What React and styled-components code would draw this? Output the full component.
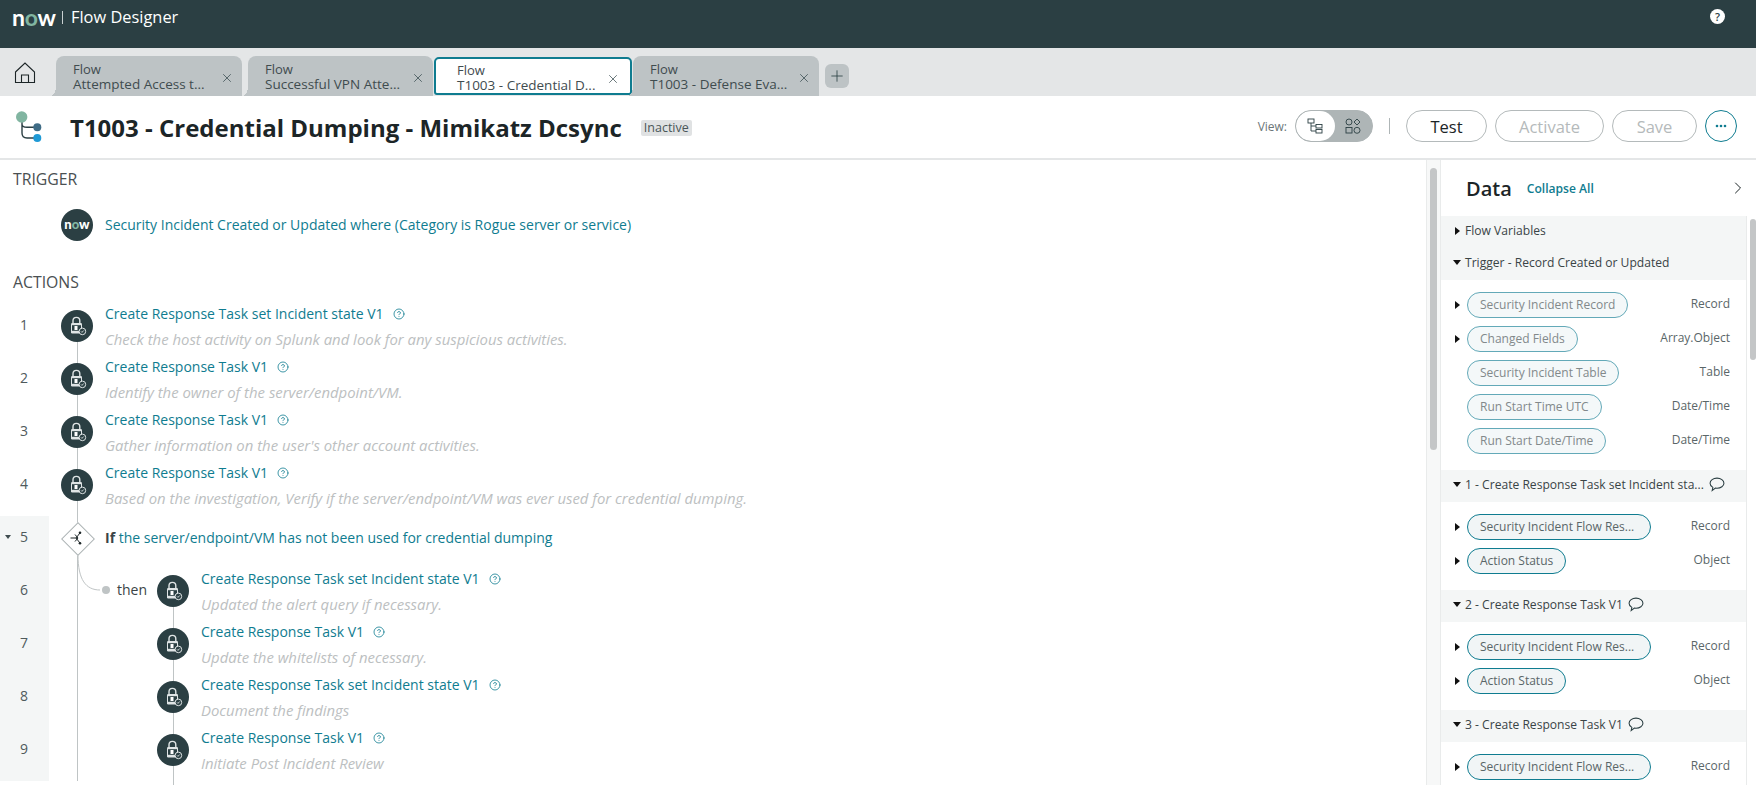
import styled, { createGlobalStyle } from "styled-components";
import { X, Plus, CircleHelp, ChevronRight } from "lucide-react";

const GlobalStyle = createGlobalStyle`
  html, body {
    margin: 0;
    padding: 0;
    background: #fff;
    font-family: "Open Sans", "Noto Sans", sans-serif;
  }
  * {
    box-sizing: border-box;
  }
`;

const Page = styled.div`
  width: 1756px;
  height: 785px;
  display: flex;
  flex-direction: column;
  overflow: hidden;
`;

const Header = styled.header`
  height: 48px;
  flex-shrink: 0;
  background: #2b3f43;
  color: #fff;
  display: flex;
  align-items: flex-start;
  padding: 7px 31px 0 12px;
`;

const Logo = styled.div`
  font-family: "Lato", sans-serif;
  font-weight: 700;
  font-size: 23px;
  line-height: 20px;
  letter-spacing: -0.3px;
  width: 43px;
  span {
    color: #81b5a1;
  }
`;

const HeaderSep = styled.div`
  width: 1px;
  height: 13px;
  margin: 4px 8px 0 7px;
  background: #c9d0d1;
`;

const AppName = styled.div`
  font-size: 16.4px;
  line-height: 20px;
  flex: 1;
`;

const HelpDot = styled.div`
  width: 15px;
  height: 15px;
  margin-top: 2px;
  border-radius: 50%;
  background: #fff;
  color: #2b3f43;
  font-size: 11px;
  font-weight: 600;
  line-height: 15px;
  text-align: center;
`;

const TabBar = styled.nav`
  height: 48px;
  flex-shrink: 0;
  background: #e4e6e7;
  display: flex;
  align-items: flex-end;
  padding-left: 13px;
`;

const HomeButton = styled.div`
  width: 43px;
  height: 40px;
  flex-shrink: 0;
  padding-top: 6px;
  color: #1c2527;
`;

const Tab = styled.div`
  position: relative;
  width: ${(p) => p.$width}px;
  height: ${(p) => (p.$active ? 38 : 40)}px;
  margin-right: ${(p) => p.$gap}px;
  margin-bottom: ${(p) => (p.$active ? 1 : 0)}px;
  padding: ${(p) => (p.$active ? "3px 0 0 21px" : "5px 0 0 17px")};
  background: ${(p) => (p.$active ? "#fff" : "#bdc3c5")};
  border: ${(p) => (p.$active ? "2px solid #0f7c90" : "none")};
  border-radius: ${(p) => (p.$active ? "5px 5px 3px 3px" : "8px 8px 0 0")};
  color: #3f4c4f;
  font-size: 13px;
  line-height: 16px;
  flex-shrink: 0;

  &::before {
    content: ${(p) => (p.$active ? "none" : '""')};
    position: absolute;
    left: -6px;
    bottom: 0;
    width: 6px;
    height: 10px;
    background: radial-gradient(ellipse at 0 0, transparent 70%, #bdc3c5 72%);
  }
`;

const TabTitle = styled.div`
  font-size: 13.5px;
  line-height: 15px;
  white-space: nowrap;
`;

const TabClose = styled(X)`
  position: absolute;
  right: ${(p) => (p.$active ? 10 : 8)}px;
  top: ${(p) => (p.$active ? 13 : 15)}px;
  color: #2b3f43;
`;

const AddTab = styled.div`
  width: 24px;
  height: 24px;
  margin: 0 0 8px 6px;
  border-radius: 6px;
  background: #bdc3c5;
  color: #2b3f43;
  display: flex;
  align-items: center;
  justify-content: center;
`;

const TitleBar = styled.div`
  height: 64px;
  flex-shrink: 0;
  border-bottom: 2px solid #e4e6e7;
  display: flex;
  align-items: center;
  padding: 0 19px 2px 16px;
`;

const FlowIcon = styled.svg`
  width: 28px;
  height: 32px;
  margin-right: 26px;
  flex-shrink: 0;
`;

const Title = styled.h1`
  margin: 3px 0 0;
  font-size: 24px;
  font-weight: 700;
  line-height: 32px;
  color: #1c2527;
`;

const StatusBadge = styled.span`
  margin: 3px 0 0 19px;
  padding: 0 3px;
  height: 16px;
  background: #e0e2e3;
  border-radius: 2px;
  font-size: 12.5px;
  line-height: 16px;
  color: #4a5658;
`;

const Toolbar = styled.div`
  margin-left: auto;
  display: flex;
  align-items: center;
`;

const ViewLabel = styled.span`
  font-size: 12px;
  color: #6b7678;
  margin-right: 8px;
`;

const ViewToggle = styled.div`
  width: 78px;
  height: 32px;
  border: 1px solid #aeb5b6;
  border-radius: 16px;
  background: #aeb5b6;
  display: flex;
  overflow: hidden;
`;

const ViewOption = styled.div`
  width: ${(p) => (p.$on ? 39 : 38)}px;
  background: ${(p) => (p.$on ? "#fff" : "transparent")};
  border-radius: ${(p) => (p.$on ? "16px" : "0")};
  display: flex;
  align-items: center;
  justify-content: center;
`;

const ToolSep = styled.div`
  width: 1px;
  height: 16px;
  background: #aeb5b6;
  margin: 0 16px;
`;

const PillButton = styled.button`
  width: ${(p) => p.$width}px;
  height: 32px;
  margin-right: 8px;
  padding: 0;
  background: #fff;
  border: 1px solid #b4babb;
  border-radius: 16px;
  font-family: inherit;
  font-size: 16.5px;
  color: ${(p) => (p.$disabled ? "#b5babb" : "#1c2527")};
`;

const MoreButton = styled.button`
  width: 32px;
  height: 32px;
  padding: 0;
  background: #fff;
  border: 1px solid #0f7c90;
  border-radius: 50%;
  display: flex;
  align-items: center;
  justify-content: center;
`;

const Body = styled.div`
  flex: 1;
  display: flex;
  min-height: 0;
`;

const Canvas = styled.main`
  flex: 1;
  overflow: hidden;
`;

const SectionTitle = styled.div`
  height: 38px;
  margin-top: ${(p) => p.$top || 0}px;
  padding-left: 13px;
  font-size: 15.8px;
  font-weight: 500;
  line-height: 38px;
  color: #4a5052;
`;

const TriggerRow = styled.div`
  display: flex;
  align-items: center;
  gap: 12px;
  margin-top: 11px;
  padding-left: 61px;
`;

const NowBadge = styled.div`
  width: 32px;
  height: 32px;
  border-radius: 50%;
  background: #2b3f43;
  color: #fff;
  font-family: "Lato", sans-serif;
  font-weight: 900;
  font-size: 13px;
  line-height: 31px;
  text-align: center;
  span {
    color: #81b5a1;
  }
`;

const StepLink = styled.span`
  color: #0f7c90;
  font-size: 14px;
  line-height: 20px;
  white-space: nowrap;
`;

const ActionList = styled.div`
  margin-top: 3px;
`;

const Row = styled.div`
  position: relative;
  height: 53px;
  display: flex;

  &::before {
    content: "";
    position: absolute;
    left: 77px;
    top: ${(p) => (p.$first ? 22 : 0)}px;
    bottom: 0;
    width: 1px;
    background: #bfc4c5;
  }
`;

const Gutter = styled.div`
  width: 49px;
  flex-shrink: 0;
  padding: 11px 0 0 20px;
  background: ${(p) => (p.$shade ? "#f4f6f6" : "transparent")};
  color: #4f5a5c;
  font-size: 14px;
  line-height: 20px;
  position: relative;
`;

const GutterCaret = styled.i`
  position: absolute;
  left: 5px;
  top: 19px;
  border-left: 3.5px solid transparent;
  border-right: 3.5px solid transparent;
  border-top: 4px solid #3f4c4f;
`;

const Spacer = styled.div`
  width: 12px;
  flex-shrink: 0;
`;

const Branch = styled.div`
  position: relative;
  width: 110px;
  flex-shrink: 0;
  color: #3a4446;
  font-size: 14px;
  line-height: 20px;
  padding: 11px 0 0 68px;
`;

const BranchCurve = styled.svg`
  position: absolute;
  left: 28px;
  top: -14px;
  width: 34px;
  height: 42px;
`;

const Node = styled.div`
  position: relative;
  z-index: 1;
  width: 32px;
  height: 32px;
  margin-top: 6px;
  margin-right: 12px;
  margin-left: ${(p) => (p.$nested ? -2 : 0)}px;
  flex-shrink: 0;
  border-radius: 50%;
  background: #2b3f43;
  display: flex;
  align-items: center;
  justify-content: center;

  &::after {
    content: "";
    position: absolute;
    left: 16px;
    top: 32px;
    width: 1px;
    height: 21px;
    background: #bfc4c5;
  }
`;

const Diamond = styled.div`
  position: relative;
  z-index: 1;
  width: 32px;
  height: 32px;
  margin-top: 6px;
  margin-right: 12px;
  flex-shrink: 0;
  display: flex;
  align-items: center;
  justify-content: center;

  &::before {
    content: "";
    position: absolute;
    left: 5px;
    top: 5px;
    width: 22px;
    height: 22px;
    background: #fff;
    border: 1px solid #aeb5b6;
    transform: rotate(45deg);
  }
  svg {
    position: relative;
  }
`;

const StepText = styled.div`
  padding-top: ${(p) => (p.$single ? 10 : 0)}px;
  min-width: 0;
`;

const StepHead = styled.div`
  display: flex;
  align-items: center;
  gap: 9px;
  height: 20px;
`;

const HelpIcon = styled(CircleHelp)`
  color: #0f7c90;
  flex-shrink: 0;
`;

const StepNote = styled.div`
  margin-top: 5px;
  color: #bcc0c1;
  font-size: 14.9px;
  font-style: italic;
  line-height: 20px;
  white-space: nowrap;
`;

const Strong = styled.b`
  color: #3a4446;
  font-weight: 700;
`;

const ScrollTrack = styled.div`
  width: ${(p) => p.$width}px;
  flex-shrink: 0;
  padding: ${(p) => p.$pad};
  background: ${(p) => p.$bg};
  border-left: 1px solid #e9ebeb;
  border-right: ${(p) => (p.$edge ? "1px solid #e9ebeb" : "none")};
`;

const ScrollThumb = styled.div`
  height: ${(p) => p.$height}px;
  border-radius: 4px;
  background: #c4c6c7;
`;

const Panel = styled.aside`
  width: 315px;
  flex-shrink: 0;
  display: flex;
  flex-direction: column;
  min-height: 0;
`;

const PanelHead = styled.div`
  height: 56px;
  flex-shrink: 0;
  display: flex;
  align-items: center;
  padding: 0 8px 0 25px;
  color: #1c2527;
`;

const PanelTitle = styled.div`
  font-size: 20px;
  font-weight: 600;
`;

const CollapseAll = styled.div`
  margin-left: 15px;
  margin-top: 1px;
  flex: 1;
  font-size: 12.1px;
  font-weight: 600;
  color: #0f7c90;
`;

const PanelScroll = styled.div`
  flex: 1;
  display: flex;
  min-height: 0;
`;

const PanelList = styled.div`
  width: 305px;
  flex-shrink: 0;
  overflow: hidden;
`;

const GroupHead = styled.div`
  height: 32px;
  padding-bottom: 3px;
  background: #f4f6f6;
  display: flex;
  align-items: center;
  padding-left: ${(p) => (p.$closed ? 14 : 12)}px;
  color: #3a4446;
  font-size: 12.1px;
  white-space: nowrap;
`;

const CaretDown = styled.i`
  margin-right: 4px;
  border-left: 4px solid transparent;
  border-right: 4px solid transparent;
  border-top: 5px solid #111;
`;

const CaretRight = styled.i`
  flex-shrink: 0;
  border-top: 4px solid transparent;
  border-bottom: 4px solid transparent;
  border-left: 5px solid #111;
`;

const GroupName = styled.span`
  margin-left: ${(p) => (p.$closed ? 5 : 0)}px;
`;

const CommentIcon = styled.svg`
  width: 16px;
  height: 15px;
  margin-left: 5px;
  flex-shrink: 0;
`;

const GroupBody = styled.div`
  padding: 12px 16px 16px 14px;
  background: #fff;
  display: flex;
  flex-direction: column;
  gap: 8px;
`;

const DataRow = styled.div`
  height: 26px;
  display: flex;
  align-items: center;
`;

const CaretSlot = styled.div`
  width: 12px;
  flex-shrink: 0;
  display: flex;
  align-items: center;
`;

const DataPill = styled.div`
  height: 26px;
  width: ${(p) => (p.$width ? `${p.$width}px` : "auto")};
  padding: 0 12px;
  border: 1px solid ${(p) => (p.$dark ? "#0f7c90" : "#63a9b8")};
  border-radius: 13px;
  background: ${(p) => (p.$dark ? "#f1f5f6" : "#f4f8f9")};
  color: ${(p) => (p.$dark ? "#5a6668" : "#82898b")};
  font-size: 12px;
  line-height: 24px;
  white-space: nowrap;
`;

const DataType = styled.div`
  margin-left: auto;
  margin-top: -3px;
  color: #5a6668;
  font-size: 12px;
`;

const LockIcon = () => (
  <svg width="20" height="20" viewBox="0 0 20 20" fill="none">
    <path d="M6 7V4.800a3.400 3.400 0 0 1 6.800 0V7" stroke="#dfe4e5" strokeWidth="1.400" />
    <rect x="4" y="7" width="11" height="10.500" rx="1.200" fill="#dfe4e5" />
    <rect x="5" y="9.200" width="9" height="5.600" fill="#2b3f43" />
    <rect x="7.500" y="10" width="3" height="4" fill="#fff" />
    <circle cx="15.400" cy="15.400" r="3.300" fill="#2b3f43" stroke="#dfe4e5" strokeWidth="1" />
    <path d="M14 15.400l1 1 1.700-1.900" stroke="#dfe4e5" strokeWidth="0.900" />
  </svg>
);

const BranchIcon = () => (
  <svg width="16" height="16" viewBox="0 0 16 16" fill="none" stroke="#1c2527" strokeWidth="1">
    <path d="M1.500 8h5.500L11 3M7 8l4 5M6 4.500L9 8l-3 3.500" />
    <circle cx="11" cy="2.800" r="1.300" fill="#1c2527" stroke="none" />
    <circle cx="11" cy="13.200" r="1.300" fill="#1c2527" stroke="none" />
  </svg>
);

const Comment = () => (
  <CommentIcon viewBox="0 0 15 14" fill="none" stroke="#2b3f43" strokeWidth="1">
    <path d="M7.500 1C3.900 1 1 3.100 1 5.800c0 1.600 1 3 2.600 3.900L3 12.600l3-2.200c.5.100 1 .100 1.500.100 3.600 0 6.500-2.100 6.500-4.700S11.100 1 7.500 1z" />
  </CommentIcon>
);

const Step = ({ n, title, note, nested, first, then }) => (
  <Row $first={first}>
    <Gutter $shade={nested}>{n}</Gutter>
    {nested ? (
      <Branch>
        {then && (
          <>
            <BranchCurve viewBox="0 0 34 42" fill="none">
              <path d="M1 0c0 25 8 35 22 35" stroke="#bfc4c5" strokeWidth="1" />
              <circle cx="29" cy="35" r="4" fill="#bfc4c5" />
            </BranchCurve>
            then
          </>
        )}
      </Branch>
    ) : (
      <Spacer />
    )}
    <Node $nested={nested}>
      <LockIcon />
    </Node>
    <StepText>
      <StepHead>
        <StepLink>{title}</StepLink>
        <HelpIcon size={12} strokeWidth={1.6} />
      </StepHead>
      <StepNote>{note}</StepNote>
    </StepText>
  </Row>
);

const tabs = [
  { title: "Attempted Access t...", width: 186, gap: 6 },
  { title: "Successful VPN Atte...", width: 185, gap: 1 },
  { title: "T1003 - Credential D...", width: 198, gap: 1, active: true },
  { title: "T1003 - Defense Eva...", width: 186, gap: 0 },
];

const groups = [
  {
    title: "1 - Create Response Task set Incident sta...",
    items: [
      { name: "Security Incident Flow Res...", type: "Record", open: true, width: 184 },
      { name: "Action Status", type: "Object", open: true },
    ],
  },
  {
    title: "2 - Create Response Task V1",
    items: [
      { name: "Security Incident Flow Res...", type: "Record", open: true, width: 184 },
      { name: "Action Status", type: "Object", open: true },
    ],
  },
  {
    title: "3 - Create Response Task V1",
    items: [{ name: "Security Incident Flow Res...", type: "Record", open: true, width: 184 }],
  },
];

const triggerItems = [
  { name: "Security Incident Record", type: "Record", open: true },
  { name: "Changed Fields", type: "Array.Object", open: true },
  { name: "Security Incident Table", type: "Table" },
  { name: "Run Start Time UTC", type: "Date/Time" },
  { name: "Run Start Date/Time", type: "Date/Time" },
];

const DataItem = ({ item, dark }) => (
  <DataRow>
    <CaretSlot>{item.open && <CaretRight />}</CaretSlot>
    <DataPill $dark={dark} $width={item.width}>
      {item.name}
    </DataPill>
    <DataType>{item.type}</DataType>
  </DataRow>
);

const App = () => {
  return (
    <Page>
      <GlobalStyle />
      <Header>
        <Logo>
          n<span>o</span>w
        </Logo>
        <HeaderSep />
        <AppName>Flow Designer</AppName>
        <HelpDot>?</HelpDot>
      </Header>

      <TabBar>
        <HomeButton>
          <svg width="24" height="24" viewBox="0 0 24 24" fill="none" stroke="currentColor" strokeWidth="1.100">
            <path d="M2.500 10L12 1l9.500 9v10.500h-19z" />
            <path d="M8.500 20.500V13h7v7.500" />
          </svg>
        </HomeButton>
        {tabs.map((t) => (
          <Tab key={t.title} $width={t.width} $gap={t.gap} $active={t.active}>
            <div>Flow</div>
            <TabTitle>{t.title}</TabTitle>
            <TabClose $active={t.active} size={14} strokeWidth={1.2} />
          </Tab>
        ))}
        <AddTab>
          <Plus size={18} strokeWidth={1.1} />
        </AddTab>
      </TabBar>

      <TitleBar>
        <FlowIcon viewBox="0 0 28 32" fill="none">
          <path d="M6 12v11c0 3 2 5 5 5h7M6 14c0 2.500 2 3.300 5 3.300h7" stroke="#2b3f43" strokeWidth="1.400" />
          <circle cx="5.700" cy="7" r="5.700" fill="#81b5a1" />
          <circle cx="21.300" cy="17.300" r="4" fill="#3f6c86" />
          <circle cx="21.300" cy="28" r="4" fill="#1f9ad6" />
        </FlowIcon>
        <Title>T1003 - Credential Dumping - Mimikatz Dcsync</Title>
        <StatusBadge>Inactive</StatusBadge>
        <Toolbar>
          <ViewLabel>View:</ViewLabel>
          <ViewToggle>
            <ViewOption $on>
              <svg width="16" height="16" viewBox="0 0 16 16" fill="none" stroke="#2b3f43" strokeWidth="0.900">
                <rect x="1" y="1" width="6" height="4" />
                <rect x="9" y="6.500" width="6" height="3.500" />
                <rect x="9" y="11.500" width="6" height="3.500" />
                <path d="M4 5v8h5M4 8h5" />
              </svg>
            </ViewOption>
            <ViewOption>
              <svg width="16" height="16" viewBox="0 0 16 16" fill="none" stroke="#2b3f43" strokeWidth="0.900">
                <circle cx="4" cy="4" r="3" />
                <path d="M12 1l3 3-3 3-3-3z" />
                <rect x="1" y="9.500" width="6" height="5.500" />
                <circle cx="12" cy="12.300" r="3" />
              </svg>
            </ViewOption>
          </ViewToggle>
          <ToolSep />
          <PillButton $width={81}>Test</PillButton>
          <PillButton $width={109} $disabled>
            Activate
          </PillButton>
          <PillButton $width={85} $disabled>
            Save
          </PillButton>
          <MoreButton>
            <svg width="12" height="4" viewBox="0 0 12 4" fill="#0f7c90">
              <circle cx="2" cy="2" r="1.300" />
              <circle cx="6" cy="2" r="1.300" />
              <circle cx="10" cy="2" r="1.300" />
            </svg>
          </MoreButton>
        </Toolbar>
      </TitleBar>

      <Body>
        <Canvas>
          <SectionTitle>TRIGGER</SectionTitle>
          <TriggerRow>
            <NowBadge>
              n<span>o</span>w
            </NowBadge>
            <StepLink>Security Incident Created or Updated where (Category is Rogue server or service)</StepLink>
          </TriggerRow>
          <SectionTitle $top={22}>ACTIONS</SectionTitle>
          <ActionList>
            <Step
              n="1"
              first
              title="Create Response Task set Incident state V1"
              note="Check the host activity on Splunk and look for any suspicious activities."
            />
            <Step n="2" title="Create Response Task V1" note="Identify the owner of the server/endpoint/VM." />
            <Step n="3" title="Create Response Task V1" note="Gather information on the user's other account activities." />
            <Step
              n="4"
              title="Create Response Task V1"
              note="Based on the investigation, Verify if the server/endpoint/VM was ever used for credential dumping."
            />
            <Row>
              <Gutter $shade>
                <GutterCaret />5
              </Gutter>
              <Spacer />
              <Diamond>
                <BranchIcon />
              </Diamond>
              <StepText $single>
                <StepLink>
                  <Strong>If</Strong> the server/endpoint/VM has not been used for credential dumping
                </StepLink>
              </StepText>
            </Row>
            <Step
              n="6"
              nested
              then
              title="Create Response Task set Incident state V1"
              note="Updated the alert query if necessary."
            />
            <Step n="7" nested title="Create Response Task V1" note="Update the whitelists of necessary." />
            <Step n="8" nested title="Create Response Task set Incident state V1" note="Document the findings" />
            <Step n="9" nested title="Create Response Task V1" note="Initiate Post Incident Review" />
          </ActionList>
        </Canvas>

        <ScrollTrack $width={15} $pad="8px 3px" $bg="#f7f8f8" $edge>
          <ScrollThumb $height={282} />
        </ScrollTrack>

        <Panel>
          <PanelHead>
            <PanelTitle>Data</PanelTitle>
            <CollapseAll>Collapse All</CollapseAll>
            <ChevronRight size={20} strokeWidth={1.2} />
          </PanelHead>
          <PanelScroll>
            <PanelList>
              <GroupHead $closed>
                <CaretRight />
                <GroupName $closed>Flow Variables</GroupName>
              </GroupHead>
              <GroupHead>
                <CaretDown />
                <GroupName>Trigger - Record Created or Updated</GroupName>
              </GroupHead>
              <GroupBody>
                {triggerItems.map((item) => (
                  <DataItem key={item.name} item={item} />
                ))}
              </GroupBody>
              {groups.map((g) => (
                <div key={g.title}>
                  <GroupHead>
                    <CaretDown />
                    <GroupName>{g.title}</GroupName>
                    <Comment />
                  </GroupHead>
                  <GroupBody>
                    {g.items.map((item) => (
                      <DataItem key={item.name} item={item} dark />
                    ))}
                  </GroupBody>
                </div>
              ))}
            </PanelList>
            <ScrollTrack $width={10} $pad="3px 0 0 3px" $bg="#fff">
              <ScrollThumb $height={141} />
            </ScrollTrack>
          </PanelScroll>
        </Panel>
      </Body>
    </Page>
  );
};

export default App;
